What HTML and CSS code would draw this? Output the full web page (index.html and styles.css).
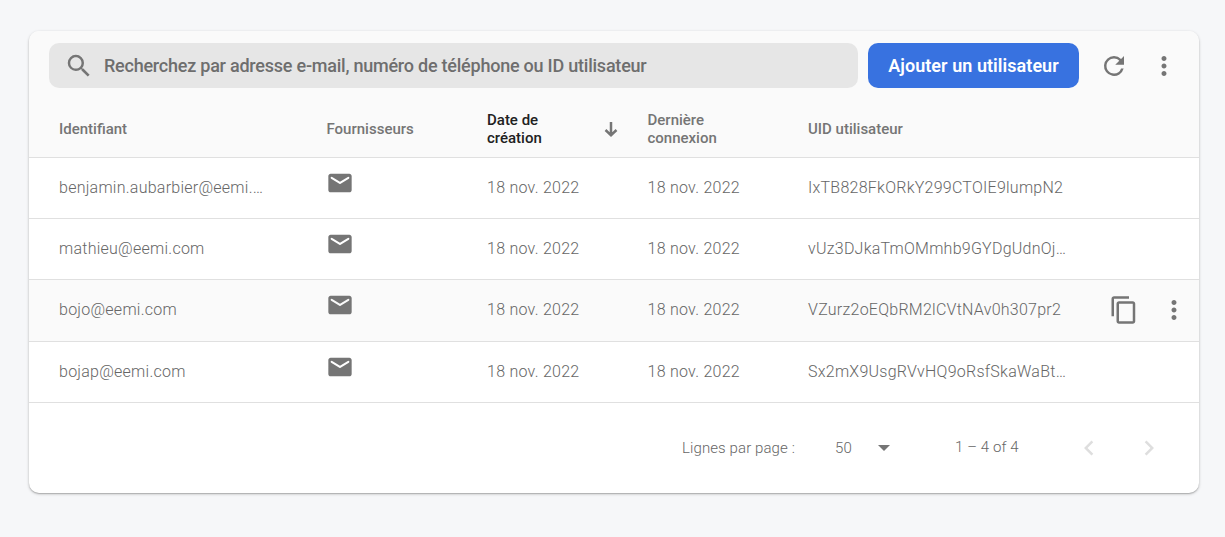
FILE: index.html
```html
<!DOCTYPE html>
<html lang="fr">
<head>
<meta charset="utf-8">
<title>Utilisateurs</title>
<link rel="stylesheet" href="styles.css">
</head>
<body>
<svg width="0" height="0" class="defs">
  <symbol id="mail" viewBox="0 0 24 24"><path d="M20 4H4c-1.100 0-2 .9-2 2v12c0 1.100.9 2 2 2h16c1.100 0 2-.9 2-2V6c0-1.100-.9-2-2-2zm-.4 4.250l-7.070 4.420c-.32.2-.74.2-1.060 0L4.400 8.250a.85.85 0 1 1 .9-1.440L12 11l6.700-4.190a.85.85 0 1 1 .9 1.440z"/></symbol>
  <symbol id="more" viewBox="0 0 24 24"><path d="M12 8c1.100 0 2-.9 2-2s-.9-2-2-2-2 .9-2 2 .9 2 2 2zm0 2c-1.100 0-2 .9-2 2s.9 2 2 2 2-.9 2-2-.9-2-2-2zm0 6c-1.100 0-2 .9-2 2s.9 2 2 2 2-.9 2-2-.9-2-2-2z"/></symbol>
</svg>
<main class="card">
  <div class="toolbar">
    <label class="search">
      <svg class="icon" viewBox="0 0 24 24"><path d="M15.500 14h-.79l-.28-.27A6.471 6.471 0 0 0 16 9.500 6.500 6.500 0 1 0 9.500 16c1.610 0 3.090-.59 4.230-1.570l.27.28v.79l5 4.990L20.490 19l-4.990-5zm-6 0C7.010 14 5 11.990 5 9.500S7.010 5 9.500 5 14 7.010 14 9.500 11.990 14 9.500 14z"/></svg>
      <span class="placeholder">Recherchez par adresse e-mail, numéro de téléphone ou ID utilisateur</span>
    </label>
    <button class="add"><span>Ajouter un utilisateur</span></button>
    <svg class="icon refresh" viewBox="0 0 24 24"><path d="M17.650 6.350A7.958 7.958 0 0 0 12 4a8 8 0 1 0 7.730 10h-2.080A5.990 5.990 0 0 1 12 18c-3.310 0-6-2.690-6-6s2.690-6 6-6c1.660 0 3.140.69 4.220 1.780L13 11h7V4l-2.350 2.350z"/></svg>
    <svg class="icon more-top"><use href="#more"/></svg>
  </div>
  <div class="row head">
    <span>Identifiant</span><span>Fournisseurs</span>
    <span class="sorted"><span>Date de<br>création</span><svg class="arrow" viewBox="0 0 14 16"><path d="M7 0v12M1.500 8L7 13.200 12.500 8"/></svg></span>
    <span>Dernière<br>connexion</span><span>UID utilisateur</span>
  </div>
  <div class="row"><span>benjamin.aubarbier@eemi.…</span><svg class="mail"><use href="#mail"/></svg><span>18 nov. 2022</span><span>18 nov. 2022</span><span>IxTB828FkORkY299CTOIE9lumpN2</span></div>
  <div class="row"><span>mathieu@eemi.com</span><svg class="mail"><use href="#mail"/></svg><span>18 nov. 2022</span><span>18 nov. 2022</span><span>vUz3DJkaTmOMmhb9GYDgUdnOj…</span></div>
  <div class="row hover"><span>bojo@eemi.com</span><svg class="mail"><use href="#mail"/></svg><span>18 nov. 2022</span><span>18 nov. 2022</span><span>VZurz2oEQbRM2lCVtNAv0h307pr2</span>
    <span class="actions"><svg class="copy" viewBox="0 0 24 24"><path d="M16 1H4c-1.100 0-2 .9-2 2v14h2V3h12V1zm3 4H8c-1.100 0-2 .9-2 2v14c0 1.100.9 2 2 2h11c1.100 0 2-.9 2-2V7c0-1.100-.9-2-2-2zm0 16H8V7h11v14z"/></svg><svg class="icon"><use href="#more"/></svg></span></div>
  <div class="row last"><span>bojap@eemi.com</span><svg class="mail"><use href="#mail"/></svg><span>18 nov. 2022</span><span>18 nov. 2022</span><span>Sx2mX9UsgRVvHQ9oRsfSkaWaBt…</span></div>
  <div class="pager">
    <span class="label">Lignes par page :</span><span class="size">50</span><i class="caret"></i><span class="range">1 – 4 of 4</span>
    <svg class="chev" viewBox="0 0 24 24"><path d="M15.410 7.410L14 6l-6 6 6 6 1.410-1.410L10.830 12z"/></svg>
    <svg class="chev" viewBox="0 0 24 24"><path d="M10 6L8.590 7.410 13.170 12l-4.580 4.590L10 18l6-6z"/></svg>
  </div>
</main>
</body>
</html>
```
FILE: styles.css
```css
* { box-sizing: border-box; }
body { margin: 0; min-height: 100vh; padding: 31px 26px 0 29px; background: #f6f7f9; font-family: Roboto, sans-serif; color: #666; }
.defs { position: absolute; }
svg { fill: #757575; display: block; flex: none; }
.card { width: 1170px; height: 462px; background: #fff; border-radius: 10px; overflow: hidden; box-shadow: 0 1px 3px rgba(0,0,0,.25), 0 1px 1px rgba(0,0,0,.14); }
.toolbar { height: 69px; padding: 12px 20px 0; display: flex; align-items: flex-start; background: #fafafa; }
.search { width: 809px; height: 45px; border-radius: 10px; background: #e6e6e6; display: flex; align-items: center; padding-left: 15px; }
.icon { width: 30px; height: 30px; }
.placeholder { margin-left: 10px; font-size: 18px; font-weight: 500; letter-spacing: -.23px; white-space: nowrap; color: #6e6e6e; }
.add { width: 211px; height: 45px; margin-left: 10px; padding: 0; border: 0; border-radius: 10px; background: #3872e0; color: #fff; font: 600 18px Roboto, sans-serif; letter-spacing: .05px; white-space: nowrap; }
.refresh, .more-top { margin: 8px 0 0 20px; }
.row { height: 61px; border-bottom: 1px solid #e0e0e0; padding-left: 30px; display: grid; grid-template-columns: 267.500px 160.500px 160.500px 160.500px 301px auto; align-items: center; font-size: 16px; font-weight: 350; letter-spacing: .25px; white-space: nowrap; }
.row > span { margin-top: -2px; }
.row.head { height: 58px; background: #fafafa; color: #757575; font-size: 15px; font-weight: 500; line-height: 18px; letter-spacing: 0; }
.row.head > span { margin-top: 0; }
.row.last > span { margin-top: -1px; }
.row.head .sorted { color: #212121; display: flex; align-items: center; justify-content: space-between; padding-right: 30px; }
.arrow { width: 14px; height: 16px; margin-top: 2px; fill: none; stroke: #757575; stroke-width: 2.500; }
.mail { width: 28px; height: 28px; margin: -11px 0 0 -1px; }
.row.hover { height: 62px; background: #fafafa; }
.actions { display: flex; align-items: center; gap: 20px; }
.copy { width: 30px; height: 30px; }
.pager { height: 90px; display: flex; align-items: center; padding-left: 653px; font-size: 15px; font-weight: 350; letter-spacing: .1px; white-space: nowrap; }
.label { width: 153px; }
.size { width: 43px; }
.caret { border: 6px solid transparent; border-top-color: #757575; border-bottom: 0; }
.range { margin: -2px 0 0 65px; width: 119px; }
.chev { width: 30px; height: 30px; fill: #dedede; margin-right: 30px; }
```
